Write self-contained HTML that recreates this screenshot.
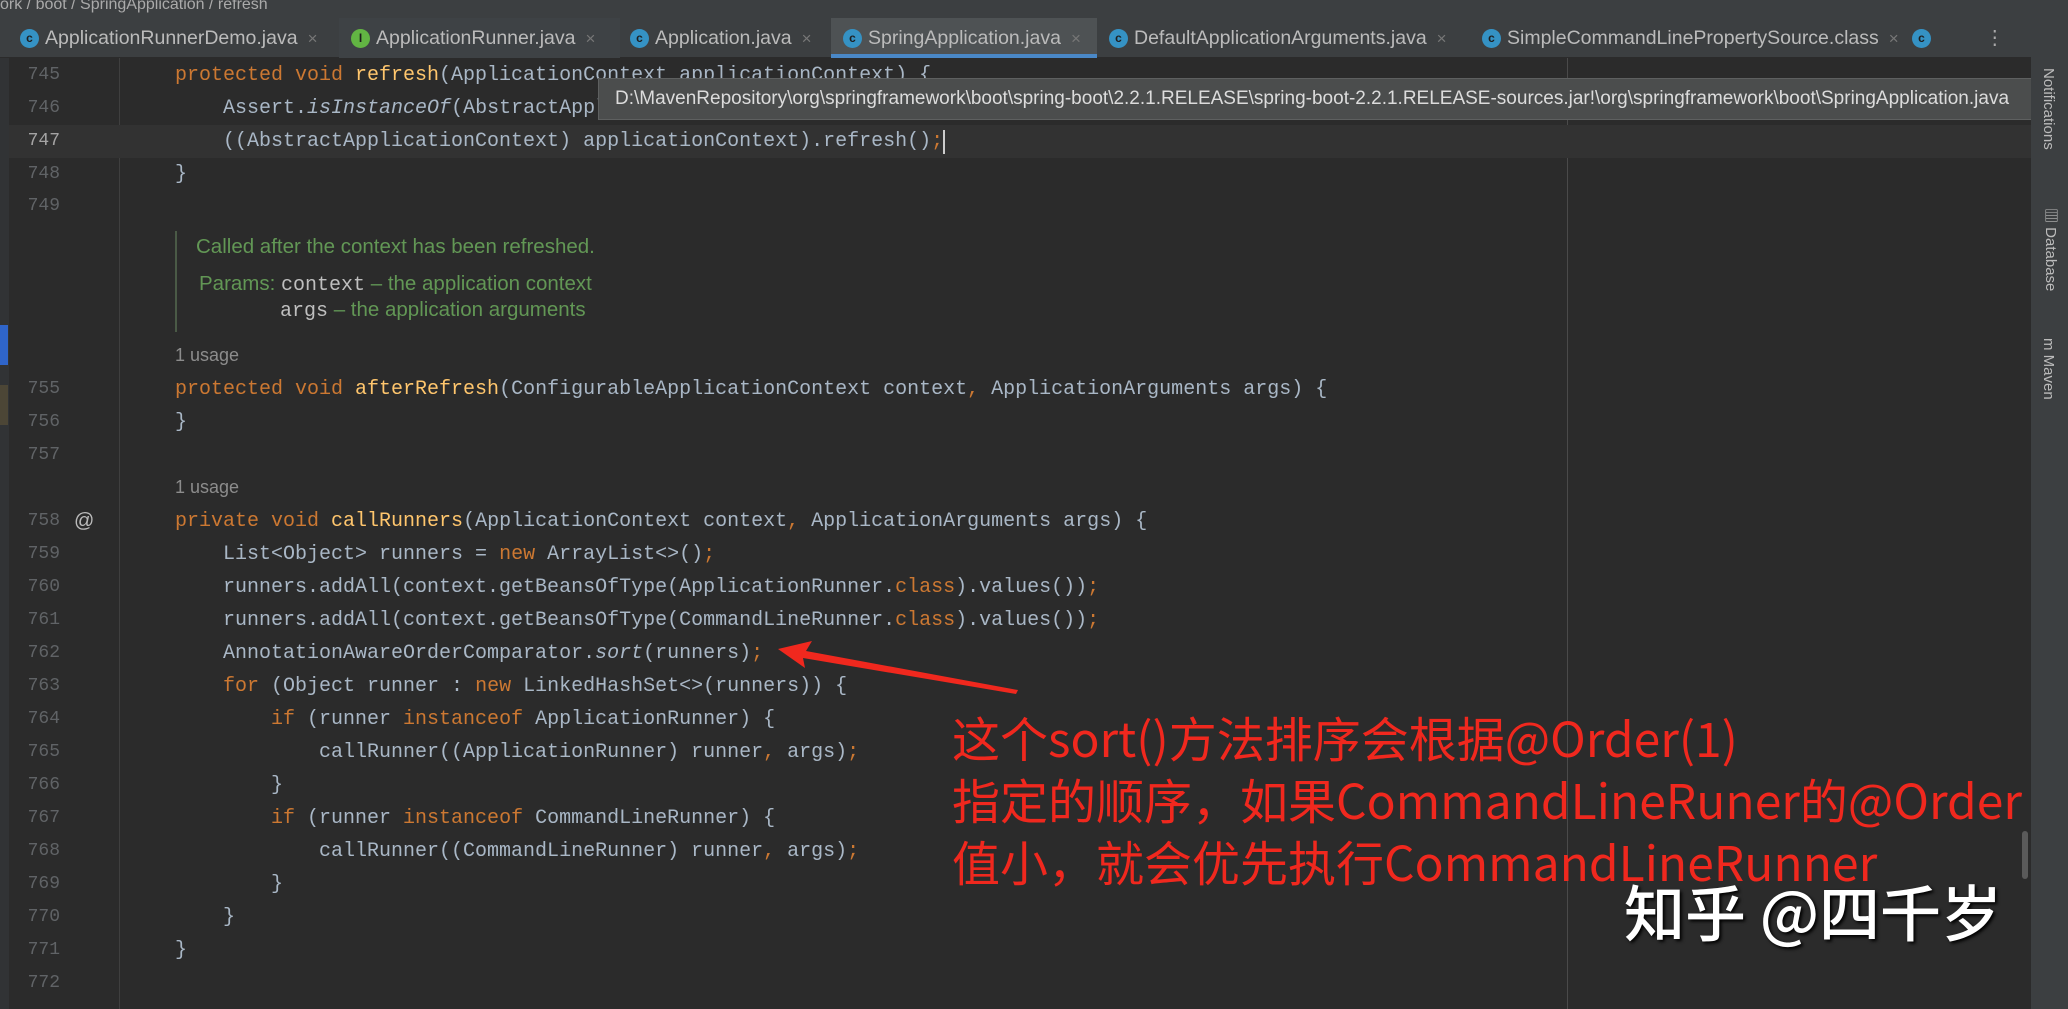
<!DOCTYPE html>
<html><head><meta charset="utf-8"><style>
*{margin:0;padding:0;box-sizing:border-box}
body{width:2068px;height:1009px;overflow:hidden;background:#2b2b2b;position:relative;font-family:"Liberation Sans","Noto Sans CJK SC",sans-serif}
.abs{position:absolute}
.bc{left:0;top:0;width:2068px;height:18px;background:#3c3f41;color:#aaa;font-size:16px;line-height:10px;overflow:hidden}
.tabs{left:0;top:18px;width:2031px;height:40px;background:#3c3f41;border-bottom:1px solid #2b2b2b}
.tab{position:absolute;top:0;height:40px;line-height:40px;color:#bbbbbb;font-size:19.5px;white-space:nowrap;overflow:hidden}
.tab .ic{display:inline-block;width:19px;height:19px;border-radius:50%;background:#3592c4;color:#1e1e1e;font-size:12px;line-height:19px;text-align:center;vertical-align:middle;margin-right:6px;font-weight:bold}
.tab .x{color:#777;margin-left:10px;font-size:17px}
.code{font-family:"Liberation Mono",monospace;font-size:20px;color:#a9b7c6;white-space:pre;line-height:33px}
.ln{position:absolute;left:0;width:60px;text-align:right;font-family:"Liberation Mono",monospace;font-size:18px;color:#606366;line-height:33px}
.k{color:#cc7832}.m{color:#ffc66d}.i{font-style:italic}
.doc{color:#629755;font-size:20.5px;font-family:"Liberation Sans",sans-serif}
.usage{color:#8c8c8c;font-size:18px;font-family:"Liberation Sans",sans-serif}
.ann{color:#f0281e;font-family:"Noto Sans CJK SC",sans-serif;font-size:48px;line-height:62px;white-space:nowrap}
.side{left:2031px;top:18px;width:37px;height:991px;background:#3c3f41}
.vt{position:absolute;writing-mode:vertical-rl;color:#bbb;font-size:15px;left:9px}
</style></head><body>
<div class="abs bc">ork / boot / SpringApplication / refresh</div>
<div class="abs tabs">
<div class="tab" style="left:20px;width:319px"><span class="ic">c</span>ApplicationRunnerDemo.java<span class="x">×</span></div>
<div class="tab" style="left:339px;background:#3e4245;padding-left:12px;width:281px"><span class="ic" style="background:#62b543">I</span>ApplicationRunner.java<span class="x">×</span></div>
<div class="tab" style="left:620px;padding-left:10px;width:211px"><span class="ic">c</span>Application.java<span class="x">×</span></div>
<div class="tab" style="left:831px;padding-left:12px;width:266px;background:#4e5254;border-bottom:4px solid #4a88c7"><span class="ic">c</span>SpringApplication.java<span class="x">×</span></div>
<div class="tab" style="left:1103px;padding-left:6px;width:373px"><span class="ic">c</span>DefaultApplicationArguments.java<span class="x">×</span></div>
<div class="tab" style="left:1476px;padding-left:6px;width:430px"><span class="ic">c</span>SimpleCommandLinePropertySource.class<span class="x">×</span></div>
<div class="tab" style="left:1912px"><span class="ic">c</span></div>
<div class="tab" style="left:1985px;color:#aaa">⋮</div>
</div>
<div class="abs" style="left:119px;top:58px;width:1px;height:951px;background:#3f3f3f"></div>
<div class="abs" style="left:1567px;top:58px;width:1px;height:951px;background:#4a4a4a"></div>
<div class="abs" style="left:0;top:125px;width:2031px;height:33px;background:#323232"></div>
<div class="abs" style="left:0;top:58px;width:9px;height:951px;background:#313335"></div>
<div class="abs" style="left:0;top:325px;width:8px;height:40px;background:#2f65ca"></div>
<div class="abs" style="left:0;top:385px;width:8px;height:40px;background:#4c4636"></div>

<div class="ln" style="top:59px">745</div>
<div class="ln" style="top:92px">746</div>
<div class="ln" style="top:125px;color:#a4a3a3">747</div>
<div class="ln" style="top:158px">748</div>
<div class="ln" style="top:190px">749</div>
<div class="ln" style="top:373px">755</div>
<div class="ln" style="top:406px">756</div>
<div class="ln" style="top:439px">757</div>
<div class="ln" style="top:505px">758</div>
<div class="ln" style="top:538px">759</div>
<div class="ln" style="top:571px">760</div>
<div class="ln" style="top:604px">761</div>
<div class="ln" style="top:637px">762</div>
<div class="ln" style="top:670px">763</div>
<div class="ln" style="top:703px">764</div>
<div class="ln" style="top:736px">765</div>
<div class="ln" style="top:769px">766</div>
<div class="ln" style="top:802px">767</div>
<div class="ln" style="top:835px">768</div>
<div class="ln" style="top:868px">769</div>
<div class="ln" style="top:901px">770</div>
<div class="ln" style="top:934px">771</div>
<div class="ln" style="top:967px">772</div>
<div class="abs" style="left:74px;top:505px;color:#bbb;font-size:20px;line-height:33px">@</div>

<div class="abs code" style="left:175px;top:59px"><span class="k">protected void </span><span class="m">refresh</span>(ApplicationContext applicationContext) {</div>
<div class="abs code" style="left:175px;top:92px">    Assert.<span class="i">isInstanceOf</span>(AbstractAppl</div>
<div class="abs code" style="left:175px;top:125px">    ((AbstractApplicationContext) applicationContext).refresh()<span class="k">;</span></div>
<div class="abs" style="left:943px;top:130px;width:2px;height:24px;background:#ccc"></div>
<div class="abs code" style="left:175px;top:158px">}</div>

<div class="abs" style="left:175px;top:231px;width:2px;height:101px;background:#4a5a46"></div>
<div class="abs doc" style="left:196px;top:235px">Called after the context has been refreshed.</div>
<div class="abs doc" style="left:199px;top:272px">Params: <span class="code" style="color:#bfbfbf;font-size:20px;line-height:20px">context</span> – the application context</div>
<div class="abs doc" style="left:280px;top:298px"><span class="code" style="color:#bfbfbf;font-size:20px;line-height:20px">args</span> – the application arguments</div>
<div class="abs usage" style="left:175px;top:345px">1 usage</div>
<div class="abs code" style="left:175px;top:373px"><span class="k">protected void </span><span class="m">afterRefresh</span>(ConfigurableApplicationContext context<span class="k">, </span>ApplicationArguments args) {</div>
<div class="abs code" style="left:175px;top:406px">}</div>
<div class="abs usage" style="left:175px;top:477px">1 usage</div>
<div class="abs code" style="left:175px;top:505px"><span class="k">private void </span><span class="m">callRunners</span>(ApplicationContext context<span class="k">, </span>ApplicationArguments args) {</div>
<div class="abs code" style="left:175px;top:538px">    List&lt;Object&gt; runners = <span class="k">new </span>ArrayList&lt;&gt;()<span class="k">;</span></div>
<div class="abs code" style="left:175px;top:571px">    runners.addAll(context.getBeansOfType(ApplicationRunner.<span class="k">class</span>).values())<span class="k">;</span></div>
<div class="abs code" style="left:175px;top:604px">    runners.addAll(context.getBeansOfType(CommandLineRunner.<span class="k">class</span>).values())<span class="k">;</span></div>
<div class="abs code" style="left:175px;top:637px">    AnnotationAwareOrderComparator.<span class="i">sort</span>(runners)<span class="k">;</span></div>
<div class="abs code" style="left:175px;top:670px">    <span class="k">for </span>(Object runner : <span class="k">new </span>LinkedHashSet&lt;&gt;(runners)) {</div>
<div class="abs code" style="left:175px;top:703px">        <span class="k">if </span>(runner <span class="k">instanceof </span>ApplicationRunner) {</div>
<div class="abs code" style="left:175px;top:736px">            callRunner((ApplicationRunner) runner<span class="k">, </span>args)<span class="k">;</span></div>
<div class="abs code" style="left:175px;top:769px">        }</div>
<div class="abs code" style="left:175px;top:802px">        <span class="k">if </span>(runner <span class="k">instanceof </span>CommandLineRunner) {</div>
<div class="abs code" style="left:175px;top:835px">            callRunner((CommandLineRunner) runner<span class="k">, </span>args)<span class="k">;</span></div>
<div class="abs code" style="left:175px;top:868px">        }</div>
<div class="abs code" style="left:175px;top:901px">    }</div>
<div class="abs code" style="left:175px;top:934px">}</div>

<div class="abs" style="left:598px;top:78px;width:1470px;height:42px;background:#4b4d4d;border:1px solid #5e6060;color:#dcdcdc;font-size:19px;line-height:40px;padding-left:16px;white-space:nowrap;overflow:hidden">D:\MavenRepository\org\springframework\boot\spring-boot\2.2.1.RELEASE\spring-boot-2.2.1.RELEASE-sources.jar!\org\springframework\boot\SpringApplication.java</div>

<svg class="abs" style="left:0;top:0" width="2068" height="1009"><polygon points="778,649 812,641 806,651 1018,690 1016,694 803,658 805,668" fill="#f0281e"/></svg>

<div class="abs ann" style="left:952px;top:705px">这个sort()方法排序会根据@Order(1)</div>
<div class="abs ann" style="left:952px;top:767px">指定的顺序，如果CommandLineRuner的@Order</div>
<div class="abs ann" style="left:952px;top:829px">值小，就会优先执行CommandLineRunner</div>
<div class="abs" style="left:1624px;top:870px;color:#fff;font-family:'Noto Sans CJK SC',sans-serif;font-size:61px;font-weight:500;line-height:80px;white-space:nowrap;text-shadow:2px 2px 3px #000">知乎 @四千岁</div>

<div class="abs" style="left:2022px;top:831px;width:6px;height:48px;background:#5a5a5a;border-radius:3px"></div>
<div class="abs side">
<div class="vt" style="top:50px">Notifications</div>
<div class="vt" style="top:190px">▤ Database</div>
<div class="vt" style="top:320px">m Maven</div>
</div>
</body></html>
